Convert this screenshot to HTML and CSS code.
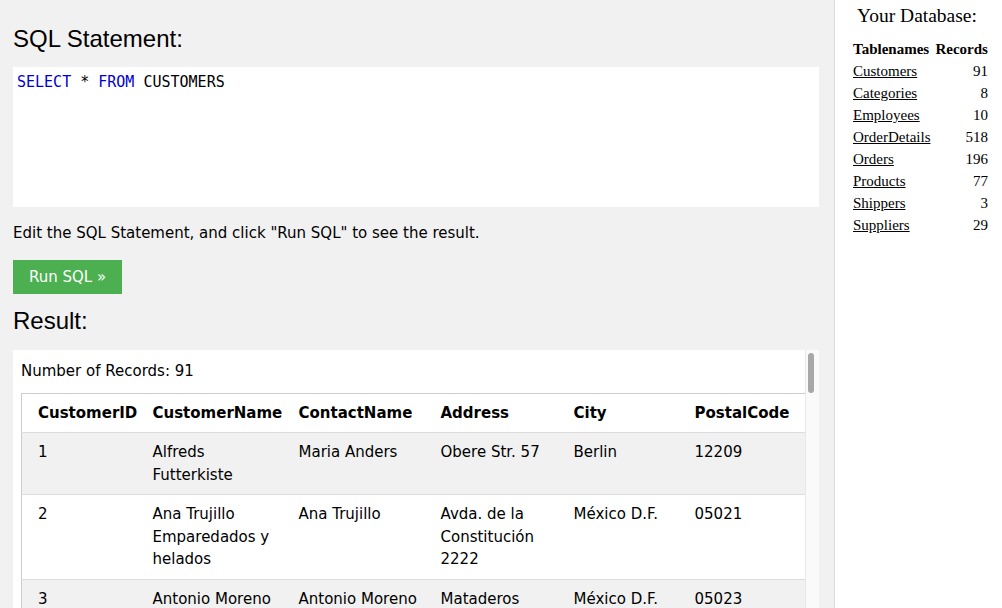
FILE: index.html
```html
<!DOCTYPE html>
<html lang="en">
<head>
<meta charset="utf-8">
<title>SQL Tryit Editor</title>
<link rel="stylesheet" href="styles.css">
</head>
<body>
<div class="main">
  <h2 class="heading">SQL Statement:</h2>
  <div class="code"><span class="kw">SELECT</span> * <span class="kw">FROM</span> CUSTOMERS</div>
  <p class="hint">Edit the SQL Statement, and click "Run SQL" to see the result.</p>
  <button class="run" type="button">Run SQL »</button>
  <h2 class="heading heading-result">Result:</h2>
  <div class="result">
    <div class="result-view">
      <div class="count">Number of Records: 91</div>
      <table class="grid">
        <colgroup>
          <col class="w1"><col class="w2"><col class="w3"><col class="w4"><col class="w5"><col class="w6"><col class="w7">
        </colgroup>
        <thead>
          <tr><th>CustomerID</th><th>CustomerName</th><th>ContactName</th><th>Address</th><th>City</th><th>PostalCode</th><th>Country</th></tr>
        </thead>
        <tbody>
          <tr><td>1</td><td>Alfreds Futterkiste</td><td>Maria Anders</td><td>Obere Str. 57</td><td>Berlin</td><td>12209</td><td>Germany</td></tr>
          <tr><td>2</td><td>Ana Trujillo Emparedados y helados</td><td>Ana Trujillo</td><td>Avda. de la Constitución 2222</td><td>México D.F.</td><td>05021</td><td>Mexico</td></tr>
          <tr><td>3</td><td>Antonio Moreno Taquería</td><td>Antonio Moreno</td><td>Mataderos 2312</td><td>México D.F.</td><td>05023</td><td>Mexico</td></tr>
        </tbody>
      </table>
    </div>
    <div class="scrolltrack"><div class="thumb"></div></div>
  </div>
</div>
<div class="aside">
  <h3 class="aside-title">Your Database:</h3>
  <table class="db">
    <thead>
      <tr><th class="name">Tablenames</th><th class="num">Records</th></tr>
    </thead>
    <tbody>
      <tr><td class="name"><a href="#">Customers</a></td><td class="num">91</td></tr>
      <tr><td class="name"><a href="#">Categories</a></td><td class="num">8</td></tr>
      <tr><td class="name"><a href="#">Employees</a></td><td class="num">10</td></tr>
      <tr><td class="name"><a href="#">OrderDetails</a></td><td class="num">518</td></tr>
      <tr><td class="name"><a href="#">Orders</a></td><td class="num">196</td></tr>
      <tr><td class="name"><a href="#">Products</a></td><td class="num">77</td></tr>
      <tr><td class="name"><a href="#">Shippers</a></td><td class="num">3</td></tr>
      <tr><td class="name"><a href="#">Suppliers</a></td><td class="num">29</td></tr>
    </tbody>
  </table>
</div>
</body>
</html>
```
FILE: styles.css
```css
html, body {
  margin: 0;
  padding: 0;
}
body {
  display: flex;
  height: 608px;
  overflow: hidden;
  font-family: "DejaVu Sans", Verdana, sans-serif;
  font-size: 15px;
  color: #000;
  background: #fff;
}
.main {
  width: 834px;
  flex: none;
  box-sizing: border-box;
  padding: 0 15px 0 13px;
  background: #f1f1f1;
  display: flex;
  flex-direction: column;
  align-items: stretch;
}
.main > * {
  flex-shrink: 0;
}
.heading {
  font-family: "Liberation Sans", Arial, sans-serif;
  font-size: 24px;
  font-weight: normal;
  line-height: 28px;
  margin: 25px 0 14px;
}
.heading-result {
  margin: 13px 0 15px;
}
.code {
  background: #fff;
  height: 140px;
  box-sizing: border-box;
  padding: 5px 4px;
  font-family: "DejaVu Sans Mono", monospace;
  font-size: 15px;
  line-height: 20px;
  color: #000;
}
.kw {
  color: #0000cd;
}
.hint {
  margin: 15px 0 16px;
  line-height: 22px;
}
.run {
  align-self: flex-start;
  margin: 0;
  border: none;
  background: #4caf50;
  color: #fff;
  font-family: "DejaVu Sans", Verdana, sans-serif;
  font-size: 15px;
  line-height: 20px;
  padding: 7px 16px;
  height: 34px;
  box-sizing: border-box;
}
.result {
  display: flex;
  background: #fff;
  height: 258px;
}
.result-view {
  flex: 1;
  min-width: 0;
  overflow: hidden;
  padding: 10px 0 0 8px;
}
.count {
  line-height: 22px;
  margin-bottom: 11px;
}
.grid {
  border-collapse: collapse;
  border: 1px solid #ccc;
  table-layout: fixed;
  width: 916px;
  line-height: 22.5px;
}
.w1 { width: 123px; }
.w2 { width: 146px; }
.w3 { width: 142px; }
.w4 { width: 133px; }
.w5 { width: 121px; }
.w6 { width: 111px; }
.w7 { width: 140px; }
.grid th,
.grid td {
  padding: 8px;
  text-align: left;
  vertical-align: top;
}
.grid th {
  font-weight: bold;
  white-space: nowrap;
  padding-bottom: 7.5px;
}
.grid th:first-child,
.grid td:first-child {
  padding-left: 16px;
}
.grid tr {
  border-bottom: 1px solid #ddd;
}
.grid thead tr {
  background: #fff;
}
.grid tbody tr:nth-child(odd) {
  background: #f1f1f1;
}
.grid tbody tr:nth-child(even) {
  background: #fff;
}
.scrolltrack {
  width: 11px;
  flex: none;
  background: #fafafa;
  border-left: 1px solid #e8e8e8;
  padding: 3px 0 0 2px;
  box-sizing: content-box;
}
.thumb {
  width: 6px;
  height: 40px;
  border-radius: 3px;
  background: #a8a8a8;
}
.aside {
  width: 168px;
  flex: none;
  box-sizing: border-box;
  border-left: 1px solid #dcdcdc;
  background: #fff;
  font-family: "Liberation Serif", "Times New Roman", serif;
}
.aside-title {
  font-size: 19.5px;
  font-weight: normal;
  line-height: 24px;
  margin: 4px 0 10px;
  padding-right: 3px;
  text-align: center;
}
.db {
  margin-left: 18px;
  border-collapse: collapse;
  font-size: 15px;
  line-height: 22px;
}
.db th,
.db td {
  padding: 0;
}
.db .name {
  text-align: left;
  padding-right: 5px;
}
.db .num {
  text-align: right;
}
.db a {
  color: #000;
  text-decoration: underline;
}
```
